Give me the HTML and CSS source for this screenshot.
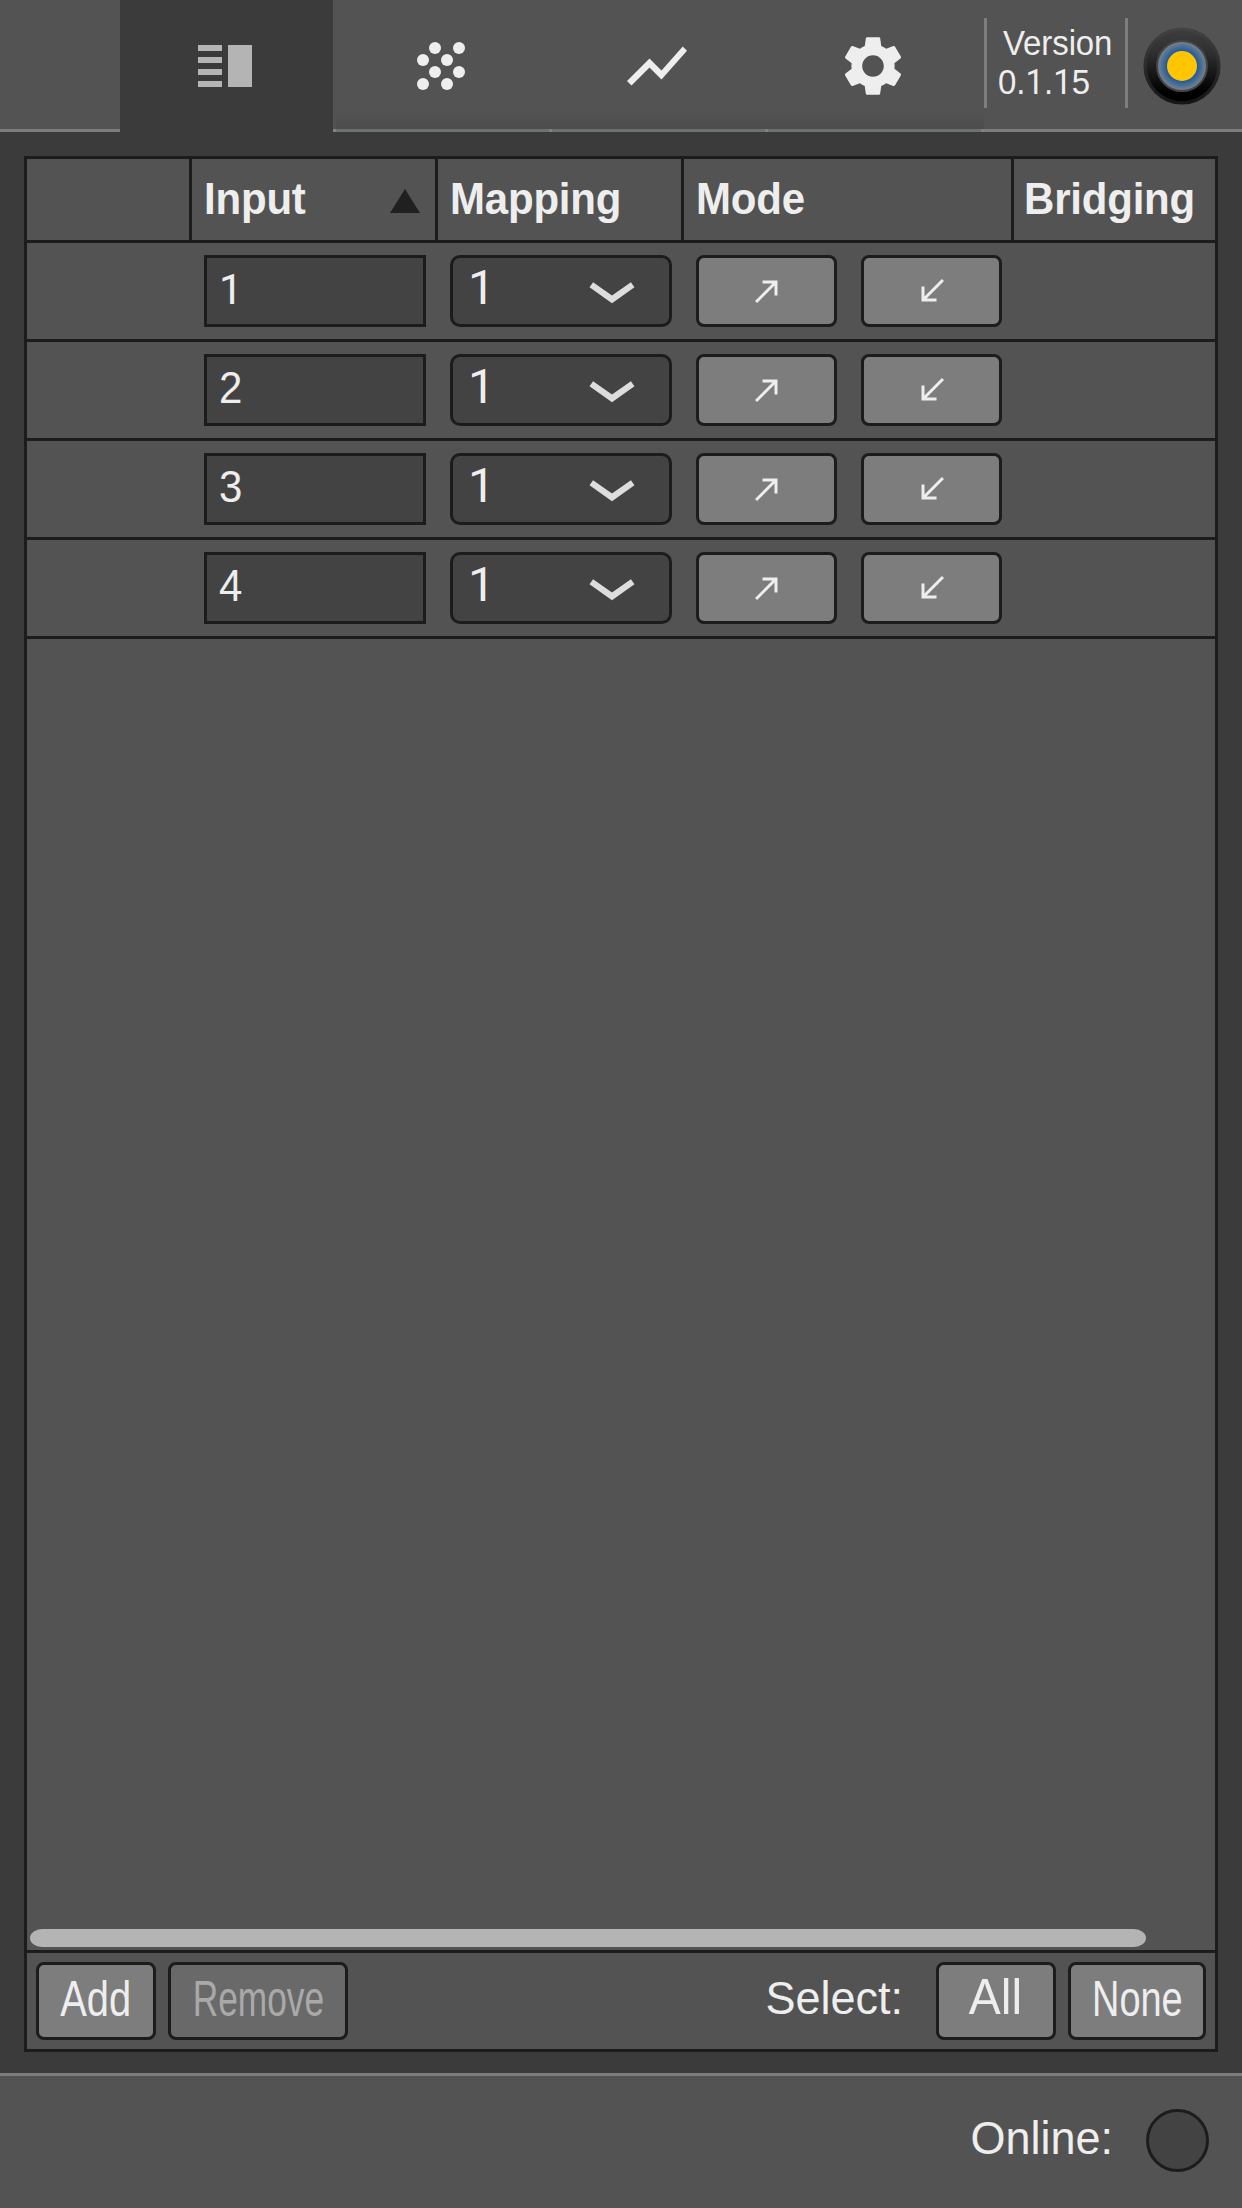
FILE: index.html
```html
<!DOCTYPE html>
<html lang="en">
<head>
<meta charset="utf-8">
<title>Inputs</title>
<link rel="stylesheet" href="styles.css">
</head>
<body>
<svg width="0" height="0" class="symbols">
  <symbol id="out" viewBox="0 0 24 24"><path d="M9 5v2h6.59L4 18.59 5.41 20 17 8.41V15h2V5z"/></symbol>
  <symbol id="in" viewBox="0 0 24 24"><path d="M20 5.41L18.59 4 7 15.59V9H5v10h10v-2H8.41z"/></symbol>
  <symbol id="chevron" viewBox="0 0 48 24"><path d="M3.3 4.8L24 19.4 44.7 4.8" fill="none" stroke="#ddd" stroke-width="6.2"/></symbol>
</svg>
<div class="app">
  <header class="topbar">
    <nav class="tabs">
      <div class="tab active"><svg viewBox="0 0 24 24"><path d="M3 5h8v2H3zM3 9h8v2H3zM3 13h8v2H3zM3 17h8v2H3zM13 5h8v14h-8z"/></svg></div>
      <div class="tab"><svg viewBox="0 0 24 24"><circle cx="10" cy="6" r="2"/><circle cx="18" cy="6" r="2"/><circle cx="6" cy="10" r="2"/><circle cx="14" cy="10" r="2"/><circle cx="10" cy="14" r="2"/><circle cx="18" cy="14" r="2"/><circle cx="6" cy="18" r="2"/><circle cx="14" cy="18" r="2"/></svg></div>
      <div class="tab"><svg viewBox="0 0 24 24"><path d="M3.5 18.49l6-6.01 4 4L22 6.92l-1.41-1.41-7.09 7.97-4-4L2 16.99z"/></svg></div>
      <div class="tab"><svg viewBox="0 0 24 24"><path d="M19.14 12.94c.04-.3.06-.61.06-.94 0-.32-.02-.64-.07-.94l2.03-1.58c.18-.14.23-.41.12-.61l-1.92-3.32c-.12-.22-.37-.29-.59-.22l-2.39.96c-.5-.38-1.03-.7-1.62-.94l-.36-2.54c-.04-.24-.24-.41-.48-.41h-3.84c-.24 0-.43.17-.47.41l-.36 2.54c-.59.24-1.13.57-1.62.94l-2.39-.96c-.22-.08-.47 0-.59.22L2.74 8.87c-.12.21-.08.47.12.61l2.03 1.58c-.05.3-.09.63-.09.94s.02.64.07.94l-2.03 1.58c-.18.14-.23.41-.12.61l1.92 3.32c.12.22.37.29.59.22l2.39-.96c.5.38 1.03.7 1.62.94l.36 2.54c.05.24.24.41.48.41h3.84c.24 0 .44-.17.47-.41l.36-2.54c.59-.24 1.13-.56 1.62-.94l2.39.96c.22.08.47 0 .59-.22l1.92-3.32c.12-.22.07-.47-.12-.61l-2.01-1.58zM12 15.6c-1.98 0-3.6-1.62-3.6-3.6s1.62-3.6 3.6-3.6 3.6 1.62 3.6 3.6-1.62 3.6-3.6 3.6z"/></svg></div>
    </nav>
    <div class="version">
      <span class="t name">Version</span>
      <span class="t">0.<span class="one">1</span>.<span class="one">1</span>5</span>
    </div>
    <svg class="logo" viewBox="0 0 78 78">
      <defs>
        <linearGradient id="rim" x1="0" y1="0" x2="0" y2="1"><stop offset="0" stop-color="#3c3c3c"/><stop offset=".3" stop-color="#303030"/><stop offset=".88" stop-color="#000"/></linearGradient>
        <linearGradient id="edge" x1="0" y1="0" x2="0" y2="1"><stop offset="0" stop-color="#434343"/><stop offset="1" stop-color="#141414"/></linearGradient>
        <radialGradient id="glow"><stop offset=".6" stop-color="#1f5a9e"/><stop offset=".95" stop-color="#74808c"/></radialGradient>
      </defs>
      <circle cx="39" cy="39" r="38.6" fill="url(#edge)"/>
      <circle cx="39" cy="39" r="35.2" fill="url(#rim)"/>
      <circle cx="39" cy="39" r="25" fill="url(#glow)" stroke="#444" stroke-width="2"/>
      <circle cx="39" cy="39" r="15" fill="#ffc600"/>
    </svg>
  </header>

  <main class="panel">
    <div class="grid head">
      <div></div>
      <div><span class="t">Input</span><svg class="sort" viewBox="0 0 30 24"><path d="M15 0L30 24H0z"/></svg></div>
      <div><span class="t">Mapping</span></div>
      <div><span class="t">Mode</span></div>
      <div class="bridging"><span class="t">Bridging</span></div>
    </div>
    <div class="grid row">
      <div class="field"><span class="one">1</span></div>
      <div class="select"><span class="one">1</span><svg><use href="#chevron"/></svg></div>
      <div class="mode"><svg><use href="#out"/></svg></div>
      <div class="mode"><svg><use href="#in"/></svg></div>
    </div>
    <div class="grid row">
      <div class="field"><span class="t">2</span></div>
      <div class="select"><span class="one">1</span><svg><use href="#chevron"/></svg></div>
      <div class="mode"><svg><use href="#out"/></svg></div>
      <div class="mode"><svg><use href="#in"/></svg></div>
    </div>
    <div class="grid row">
      <div class="field"><span class="t">3</span></div>
      <div class="select"><span class="one">1</span><svg><use href="#chevron"/></svg></div>
      <div class="mode"><svg><use href="#out"/></svg></div>
      <div class="mode"><svg><use href="#in"/></svg></div>
    </div>
    <div class="grid row">
      <div class="field"><span class="t">4</span></div>
      <div class="select"><span class="one">1</span><svg><use href="#chevron"/></svg></div>
      <div class="mode"><svg><use href="#out"/></svg></div>
      <div class="mode"><svg><use href="#in"/></svg></div>
    </div>
    <div class="scrollbar"></div>
    <div class="actions">
      <div class="btn add"><span class="t">Add</span></div>
      <div class="btn remove"><span class="t">Remove</span></div>
      <span class="t label">Select:</span>
      <div class="btn all"><span class="t">All</span></div>
      <div class="btn none"><span class="t">None</span></div>
    </div>
  </main>

  <footer class="status">
    <span class="t label">Online:</span>
    <div class="lamp"></div>
  </footer>
</div>
</body>
</html>
```
FILE: styles.css
```css
* { box-sizing: border-box; }
body {
  margin: 0;
  background: #3b3b3b;
  color: #eee;
  font-family: "Liberation Sans", Arial, sans-serif;
  font-size: 42px;
  line-height: 1;
}
svg { display: block; fill: #eee; flex: none; }
.symbols { position: absolute; }
.app { width: 1242px; height: 2208px; display: flex; flex-direction: column; }

/* Text is stretched slightly upwards from its baseline */
.t {
  display: block;
  white-space: nowrap;
  transform: scaleY(1.045);
  transform-origin: 50% 84.65%;
}
.one { font-family: Roboto, "Liberation Sans", sans-serif; }

.topbar {
  height: 132px;
  display: flex;
  padding-left: 120px;
  background: linear-gradient(#7d7d7d, #7d7d7d) bottom / 100% 3px no-repeat #535353;
}
.tabs { display: flex; width: 864px; }
.tab {
  width: 216px;
  height: 132px;
  padding: 30px 0 0 69px;
  background:
    linear-gradient(#7d8283, #7d8283) 213px 100% / 3px 3px no-repeat,
    linear-gradient(#6c7274, #6c7274) 0 100% / 216px 3px no-repeat,
    linear-gradient(#53535300, #4c4c4c) 0 111px / 216px 18px no-repeat;
}
.tab.active {
  background:
    linear-gradient(#7d8283, #7d8283) 213px 100% / 3px 3px no-repeat,
    linear-gradient(#3b3b3b, #3b3b3b) 0 0 / 213px 132px no-repeat;
}
.tab svg { width: 72px; height: 72px; }
.tab.active svg { fill: #b4b4b4; }
.version {
  width: 144px;
  height: 90px;
  margin-top: 18px;
  padding: 6px 0 0 11px;
  border: solid #7d7d7d;
  border-width: 0 3px;
  font-size: 33px;
  line-height: 39px;
}
.version .name { padding-left: 5px; letter-spacing: -.1px; }
.logo { width: 78px; height: 78px; margin: 27px 0 0 15px; }

.panel {
  height: 1896px;
  margin: 24px 24px 21px;
  border: 3px solid #1c1c1c;
  background: #535353;
  display: flex;
  flex-direction: column;
}
.grid { display: grid; flex: none; border-bottom: 3px solid #1c1c1c; }
.head {
  height: 84px;
  grid-template-columns: 165px 246px 246px 330px 201px;
  font-weight: bold;
  letter-spacing: -.2px;
}
.head > div {
  display: flex;
  align-items: flex-start;
  justify-content: space-between;
  padding: 20px 15px 0 12px;
  border-right: 3px solid #1c1c1c;
}
.head > div:last-child { border-right: 0; }
.head .bridging { padding-left: 10px; }
.sort { width: 30px; height: 24px; margin-top: 10px; fill: #202020; }

.row {
  height: 99px;
  grid-template-columns: 222px 222px 141px 141px;
  column-gap: 24px;
  padding: 12px 0 0 177px;
}
.row > div { height: 72px; border: 3px solid #1c1c1c; background: #434343; display: flex; }
.row .field { padding: 11px 12px; }
.row .select {
  border-radius: 10px;
  padding: 6px 33px 0 15px;
  justify-content: space-between;
  font-size: 48px;
}
.select svg { width: 48px; height: 24px; margin-top: 16px; }
.row .mode { border-radius: 8px; background: #7d7d7d; align-items: center; justify-content: center; }
.mode svg { width: 36px; height: 36px; }

.scrollbar {
  width: 1116px;
  height: 18px;
  margin: auto 0 3px 3px;
  border-radius: 12px / 9px;
  background: #b4b4b4;
  flex: none;
}
.actions {
  height: 99px;
  flex: none;
  display: flex;
  gap: 12px;
  padding: 9px 9px 0;
  border-top: 3px solid #1c1c1c;
}
.btn {
  height: 78px;
  flex: none;
  display: flex;
  justify-content: center;
  padding-top: 11px;
  border: 3px solid #1c1c1c;
  border-radius: 8px;
  background: #7d7d7d;
  font-size: 48px;
}
.add, .all { width: 120px; }
.remove { width: 180px; background: #696969; color: #a9a9a9; }
.none { width: 138px; }
.add .t { transform: scale(.83, 1.04); }
.remove .t { transform: scale(.735, 1.04); }
.none .t { transform: scale(.79, 1.04); }
.all { padding: 10px 1px 0 0; }
.label { font-size: 45px; }
.actions .label { margin: 15px 21px 0 auto; }

.status {
  flex: 1;
  display: flex;
  justify-content: flex-end;
  gap: 33px;
  padding-right: 33px;
  border-top: 3px solid #7d7d7d;
  background: #535353;
}
.status .label { margin-top: 42px; }
.lamp {
  width: 63px;
  height: 63px;
  margin-top: 33px;
  border: 3px solid #1c1c1c;
  border-radius: 50%;
  background: #434343;
}
```
